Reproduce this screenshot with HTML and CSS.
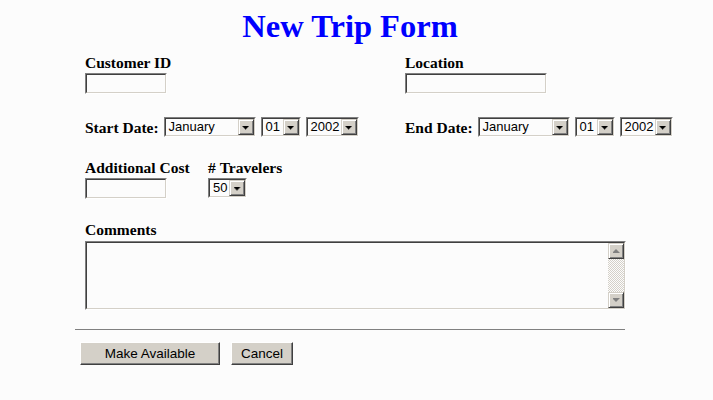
FILE: index.html
```html
<!DOCTYPE html>
<html>
<head>
<meta charset="utf-8">
<title>New Trip Form</title>
<link rel="stylesheet" href="styles.css">
</head>
<body>
<h1 class="title">New Trip Form</h1>
<form class="form">
  <div class="row row-top">
    <div class="col">
      <label class="lbl">Customer ID</label>
      <span class="field w82"><input class="text" type="text"></span>
    </div>
    <div class="col">
      <label class="lbl">Location</label>
      <span class="field w142"><input class="text" type="text"></span>
    </div>
  </div>

  <div class="row row-dates">
    <div class="col inline">
      <span class="lbl lbl-inline">Start Date:</span>
      <span class="sel w92"><span class="sel-in"><span class="val">January</span><span class="arrow"></span></span></span>
      <span class="sel w40"><span class="sel-in"><span class="val">01</span><span class="arrow"></span></span></span>
      <span class="sel w52"><span class="sel-in"><span class="val">2002</span><span class="arrow"></span></span></span>
    </div>
    <div class="col inline">
      <span class="lbl lbl-inline">End Date:</span>
      <span class="sel w92"><span class="sel-in"><span class="val">January</span><span class="arrow"></span></span></span>
      <span class="sel w40"><span class="sel-in"><span class="val">01</span><span class="arrow"></span></span></span>
      <span class="sel w52"><span class="sel-in"><span class="val">2002</span><span class="arrow"></span></span></span>
    </div>
  </div>

  <div class="row row-cost">
    <div class="col col-cost">
      <label class="lbl">Additional Cost</label>
      <span class="field w82"><input class="text" type="text"></span>
    </div>
    <div class="col">
      <label class="lbl">#&nbsp;Travelers</label>
      <span class="sel w38"><span class="sel-in"><span class="val">50</span><span class="arrow"></span></span></span>
    </div>
  </div>

  <div class="row row-comments">
    <label class="lbl">Comments</label>
    <div class="area">
      <div class="area-in">
        <textarea class="ta"></textarea>
        <div class="sb">
          <span class="sb-btn up"></span>
          <span class="sb-track"></span>
          <span class="sb-btn down"></span>
        </div>
      </div>
    </div>
  </div>

  <hr class="rule">

  <div class="buttons">
    <button type="button" class="btn btn-make">Make Available</button>
    <button type="button" class="btn btn-cancel">Cancel</button>
  </div>
</form>
</body>
</html>
```
FILE: styles.css
```css
* { box-sizing: border-box; }
html, body { background: #fcfcfc; }
body {
  margin: 8px;
  font-family: "Liberation Serif", "Times New Roman", serif;
  color: #000;
}
.title {
  margin: 0;
  width: 684px;
  font-size: 32.5px;
  line-height: 36px;
  font-weight: bold;
  text-align: center;
  color: #0000ff;
}
.form { margin-left: 77px; }
.row { display: flex; }
.col { width: 320px; flex: none; display: flex; flex-direction: column; align-items: flex-start; }
.col-cost { width: 123px; }
.inline { flex-direction: row; align-items: flex-end; }
.row-top { margin-top: 10px; }
.row-dates { margin-top: 23px; }
.row-cost { margin-top: 22px; }
.row-comments { margin-top: 22px; flex-direction: column; }

.lbl {
  display: block;
  font-size: 15.5px;
  line-height: 17px;
  font-weight: bold;
  white-space: nowrap;
}
.lbl-inline { margin-right: 5px; }
.inline .lbl { line-height: 18px; }
.row-comments .lbl { line-height: 18px; }

/* text inputs */
.field {
  display: block;
  margin-top: 2px;
  height: 21px;
  border: 1px solid;
  border-color: #808080 #ffffff #ffffff #808080;
}
.text {
  display: block;
  width: 100%;
  height: 100%;
  margin: 0;
  padding: 0 2px;
  border: 1px solid;
  border-color: #404040 #d4d0c8 #d4d0c8 #404040;
  background: #fcfcfc;
  font: 13px "Liberation Sans", Arial, sans-serif;
  outline: none;
}
.w82 { width: 82px; }
.w142 { width: 142px; }

/* fake selects */
.sel {
  display: block;
  height: 20px;
  margin-right: 5px;
  border: 1px solid;
  border-color: #808080 #ffffff #ffffff #808080;
  flex: none;
}
.sel-in {
  display: flex;
  height: 100%;
  border: 1px solid;
  border-color: #404040 #d4d0c8 #d4d0c8 #404040;
  background: #fcfcfc;
}
.val {
  flex: 1;
  padding-left: 3px;
  font: 13px/16px "Liberation Sans", Arial, sans-serif;
  white-space: nowrap;
  overflow: hidden;
}
.arrow, .sb-btn {
  position: relative;
  display: flex;
  align-items: center;
  justify-content: center;
  width: 16px;
  height: 16px;
  flex: none;
  background: #d4d0c8;
  border: 1px solid;
  border-color: #d4d0c8 #404040 #404040 #d4d0c8;
  box-shadow: inset 1px 1px #ffffff, inset -1px -1px #808080;
}
.arrow::after {
  content: "";
  width: 7px;
  height: 4px;
  margin-top: 1px;
  background: #000;
  clip-path: polygon(0 0, 7px 0, 7px 1px, 6px 1px, 6px 2px, 5px 2px, 5px 3px, 4px 3px, 4px 4px, 3px 4px, 3px 3px, 2px 3px, 2px 2px, 1px 2px, 1px 1px, 0 1px);
}
.w92 { width: 92px; }
.w40 { width: 40px; }
.w52 { width: 53px; }
.w38 { width: 39px; margin-top: 2px; }

/* textarea */
.area {
  margin-top: 2px;
  width: 541px;
  height: 69px;
  border: 1px solid;
  border-color: #808080 #ffffff #ffffff #808080;
}
.area-in {
  display: flex;
  height: 100%;
  border: 1px solid;
  border-color: #404040 #d4d0c8 #d4d0c8 #404040;
  background: #fcfcfc;
}
.ta {
  flex: 1;
  margin: 0;
  border: 0;
  padding: 2px;
  resize: none;
  outline: none;
  background: #fcfcfc;
  font: 13px "Liberation Mono", monospace;
}
.sb { display: flex; flex-direction: column; width: 16px; }
.sb-track {
  flex: 1;
  background-color: #fcfcfc;
  background-image: repeating-conic-gradient(#d4d0c8 0 25%, #fcfcfc 0 50%);
  background-size: 2px 2px;
}
.sb-btn::after {
  content: "";
  width: 7px;
  height: 4px;
  background: #808080;
  filter: drop-shadow(1px 1px 0 #ffffff);
}
.sb-btn.up::after {
  clip-path: polygon(3px 0, 4px 0, 4px 1px, 5px 1px, 5px 2px, 6px 2px, 6px 3px, 7px 3px, 7px 4px, 0 4px, 0 3px, 1px 3px, 1px 2px, 2px 2px, 2px 1px, 3px 1px);
}
.sb-btn.down::after {
  clip-path: polygon(0 0, 7px 0, 7px 1px, 6px 1px, 6px 2px, 5px 2px, 5px 3px, 4px 3px, 4px 4px, 3px 4px, 3px 3px, 2px 3px, 2px 2px, 1px 2px, 1px 1px, 0 1px);
}

.rule {
  margin: 19px 0 0 -10px;
  width: 550px;
  height: 1px;
  border: 0;
  background: #808080;
}

.buttons { display: flex; gap: 11px; margin: 12px 0 0 -5px; }
.btn {
  height: 23px;
  margin: 0;
  padding: 0;
  background: #d4d0c8;
  border: 1px solid;
  border-color: #ffffff #404040 #404040 #ffffff;
  box-shadow: inset -1px -1px #808080;
  font: 13.5px "Liberation Sans", Arial, sans-serif;
  color: #000;
}
.btn-make { width: 140px; }
.btn-cancel { width: 62px; }
```
